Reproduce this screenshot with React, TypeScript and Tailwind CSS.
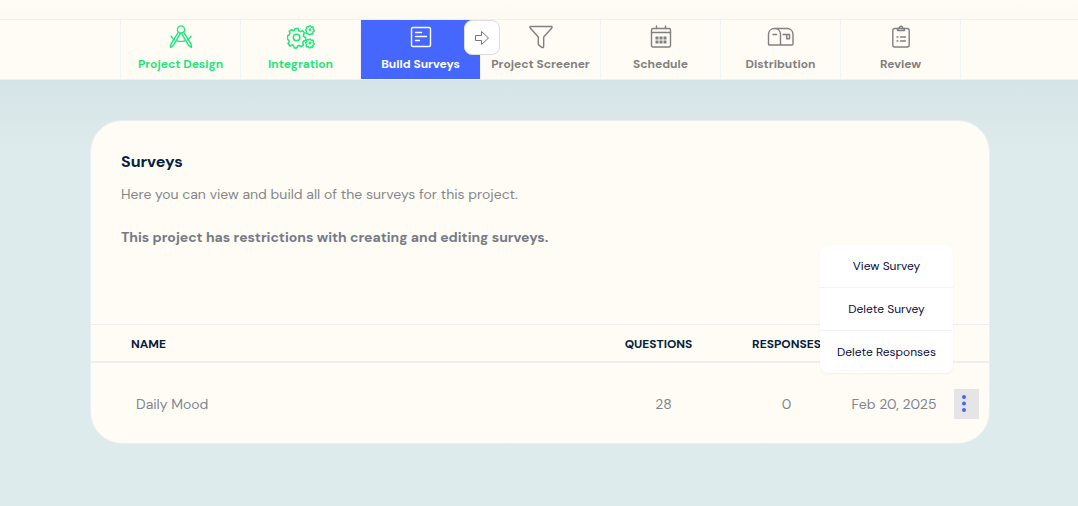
import React, { useState } from 'react';

interface Step {
  label: string;
  status: 'done' | 'active' | 'todo';
  icon: React.ReactNode;
}

interface Survey {
  name: string;
  questions: number;
  responses: number;
  created: string;
}

interface IconProps {
  children: React.ReactNode;
  wide?: boolean;
}

const Icon: React.FC<IconProps> = ({ children, wide }) => (
  <svg
    className={wide ? 'w-7 h-6' : 'w-6 h-6'}
    viewBox={wide ? '0 0 28 24' : '0 0 24 24'}
    fill="none"
    stroke="currentColor"
    strokeWidth="1.4"
    strokeLinecap="round"
    strokeLinejoin="round"
    aria-hidden="true"
  >
    {children}
  </svg>
);

const gearPath =
  'M8.4 2.5h3.2l.6 2.4 1.7.8 2.3-1.1 2 2.4-1.2 2.2.5 1.7 2 1v2.9l-2.3.7-.9 1.7.9 2.2-2.4 1.9-2.1-1.3-1.5.4-.9 2.2H7.6l-.8-2.3-1.5-.7-2.3 1-1.9-2.5 1.2-2.1-.4-1.5-1.4-.8V10l1.8-.8.8-1.7-.7-2.2 2.4-1.8L7 4.9z';

const steps: Step[] = [
  {
    label: 'Project Design',
    status: 'done',
    icon: (
      <Icon>
        <circle cx="12" cy="4.5" r="3.6" />
        <path d="M9.4 7.1 1.9 19.1l-.4 3.3 2.7-1.7L11.6 8.2M14.6 7.1l7.5 12 .4 3.3-2.7-1.7L12.4 8.2" />
        <path d="M2 11.2c1 1.6 2.2 2.8 3.6 3.7M8 15.8c2.6.8 5.4.8 8 0M18.4 14.9c1.4-.9 2.6-2.1 3.6-3.7" />
      </Icon>
    ),
  },
  {
    label: 'Integration',
    status: 'done',
    icon: (
      <Icon wide>
        <g transform="translate(0 1.2) scale(.96)" strokeWidth="1.6">
          <path d={gearPath} />
          <circle cx="10" cy="11.8" r="3.4" />
        </g>
        <g transform="translate(18.6 -.2) scale(.44)" strokeWidth="3">
          <path d={gearPath} />
          <circle cx="10" cy="11.5" r="1.8" />
        </g>
        <g transform="translate(18.6 13) scale(.44)" strokeWidth="3">
          <path d={gearPath} />
          <circle cx="10" cy="11.5" r="1.8" />
        </g>
      </Icon>
    ),
  },
  {
    label: 'Build Surveys',
    status: 'active',
    icon: (
      <Icon>
        <rect x="2.5" y="2.5" width="19" height="19" rx="1.5" />
        <path d="M6.5 7.5h6M6.5 11.5h11M6.5 15.5h4" />
      </Icon>
    ),
  },
  {
    label: 'Project Screener',
    status: 'todo',
    icon: (
      <Icon>
        <path d="M1 1.5h22v1.3l-8.3 9.2v8.5l-.2 2-1.3.1-3.9-3v-7.6L1 2.8z" />
      </Icon>
    ),
  },
  {
    label: 'Schedule',
    status: 'todo',
    icon: (
      <Icon>
        <rect x="2.5" y="3.5" width="19" height="18.5" rx="1.5" />
        <path d="M2.5 7.5h19M7.5 1v2.5M16.5 1v2.5" />
        <path
          d="M6.5 13h3M10.5 13h3M14.5 13h3M6.5 17h3M10.5 17h3M14.5 17h3"
          strokeWidth="2.8"
          strokeLinecap="butt"
        />
      </Icon>
    ),
  },
  {
    label: 'Distribution',
    status: 'todo',
    icon: (
      <Icon wide>
        <path d="M7.5 3.5h12.5c3.5 0 6 2.5 6 6v9.5a1 1 0 0 1-1 1H2.500a1 1 0 0 1-1-1V9.5c0-3.5 2.5-6 6-6s6 2.5 6 6V20" />
        <path d="M6 9.5h3.5M16 9.5h6.5v4.2h-2.8V9.5" />
      </Icon>
    ),
  },
  {
    label: 'Review',
    status: 'todo',
    icon: (
      <Icon>
        <rect x="3.8" y="3.5" width="16.4" height="18.5" rx="2" />
        <path d="M8.5 5.5v-2h1.8c0-3 3.4-3 3.4 0h1.8v2z" />
        <path d="M8 12h1M11.5 12h5M8 16h1M11.5 16h5" />
      </Icon>
    ),
  },
];

const statusStyles = {
  done: 'text-[#1fe57d]',
  active: 'text-white bg-[#4667fd]',
  todo: 'text-[#808080]',
};

const surveys: Survey[] = [
  { name: 'Daily Mood', questions: 28, responses: 0, created: 'Feb 20, 2025' },
];

const menuActions = ['View Survey', 'Delete Survey', 'Delete Responses'];

const StepNav: React.FC = () => (
  <nav className="bg-[#fffcf5] border-y border-[#eef0f2] pl-[3px]">
    <ol className="flex max-w-[841px] mx-auto border-r border-[#f1f2f5]">
      {steps.map(step => (
        <li key={step.label} className="relative flex-1 border-l border-[#f1f2f5]">
          <a
            href="#"
            className={`flex flex-col items-center h-[59px] pt-[5px] ${statusStyles[step.status]}`}
          >
            {step.icon}
            <span className="mt-[7px] text-[12px] leading-4 font-bold whitespace-nowrap">{step.label}</span>
          </a>
          {step.status === 'active' && (
            <button
              aria-label="Next step"
              className="absolute z-10 top-0 -right-5 w-9 h-[35px] flex items-center justify-center bg-white border border-[#dcdcdc] rounded-lg text-[#777]"
            >
              <svg className="w-4 h-4" viewBox="0 0 16 16" fill="none" stroke="currentColor" strokeLinejoin="round">
                <path d="M1.5 5.5h6v-4L14.5 8l-7 6.5v-4h-6z" />
              </svg>
            </button>
          )}
        </li>
      ))}
    </ol>
  </nav>
);

const SurveyMenu: React.FC = () => (
  <div
    role="menu"
    className="absolute z-10 right-full bottom-full mr-px mb-4 w-[133px] bg-white rounded-lg shadow-[0_1px_2px_rgba(0,0,0,0.05)] overflow-hidden divide-y divide-[#f1f3f6]"
  >
    {menuActions.map(action => (
      <button
        key={action}
        role="menuitem"
        className="block w-full py-[13px] text-[12px] leading-4 text-center text-[#0d0c3d] whitespace-nowrap"
      >
        {action}
      </button>
    ))}
  </div>
);

const App: React.FC = () => {
  const [openMenu, setOpenMenu] = useState<string | null>('Daily Mood');

  return (
    <div className="min-h-screen flex flex-col bg-[#deebec] font-['DM_Sans',Inter,sans-serif]">
      <div className="h-[19px] bg-linear-to-b from-[#fffcf5] to-[#fdfaf3]" />
      <StepNav />

      <main className="flex-1 pl-0.5 pt-10 pb-10 bg-linear-to-b from-[#d5e4e7] to-[#deebec] to-[70px]">
        <section className="max-w-[900px] mx-auto bg-[#fffcf5] border border-[#e9eff1] rounded-[32px]">
          <div className="px-[30px] pt-[29px] pb-[75px]">
            <h2 className="text-[16px] leading-6 font-bold text-[#04213b]">Surveys</h2>
            <p className="mt-2 text-[14px] leading-6 text-[#85878a]">
              Here you can view and build all of the surveys for this project.
            </p>
            <p className="mt-[19px] text-[14px] leading-6 font-bold text-[#737b87]">
              This project has restrictions with creating and editing surveys.
            </p>
          </div>

          <table className="w-full table-fixed">
            <colgroup>
              <col />
              <col className="w-[127px]" />
              <col className="w-[129px]" />
              <col className="w-[86px]" />
              <col className="w-[52px]" />
            </colgroup>
            <thead className="border-t border-b-2 border-[#eceff0] text-[12px] leading-4 text-[#04213b]">
              <tr className="h-[37px]">
                <th className="pl-10 pt-0.5 text-left font-bold">NAME</th>
                <th className="pt-0.5 font-bold">QUESTIONS</th>
                <th className="pt-0.5 font-bold">RESPONSES</th>
                <td />
                <td />
              </tr>
            </thead>
            <tbody className="text-[14px] leading-6 text-[#7f8690]">
              {surveys.map(survey => (
                <tr key={survey.name} className="h-[81px]">
                  <td className="pl-[45px] pt-[3px]">{survey.name}</td>
                  <td className="pl-2.5 pt-[3px] text-center">{survey.questions}</td>
                  <td className="pt-[3px] text-center">{survey.responses}</td>
                  <td className="pt-[3px] text-center whitespace-nowrap">{survey.created}</td>
                  <td className="pt-[3px]">
                    <div className="relative w-[25px] ml-auto mr-2.5">
                      <button
                        aria-label={`Actions for ${survey.name}`}
                        onClick={() => setOpenMenu(openMenu === survey.name ? null : survey.name)}
                        className="flex items-center w-full h-[30px] pl-2 bg-[#e5e5e5] text-[#4667fd]"
                      >
                        <svg className="w-1 h-[18px]" viewBox="0 0 4 18" fill="currentColor">
                          <circle cx="2" cy="2" r="2" />
                          <circle cx="2" cy="8.5" r="2" />
                          <circle cx="2" cy="15" r="2" />
                        </svg>
                      </button>
                      {openMenu === survey.name && <SurveyMenu />}
                    </div>
                  </td>
                </tr>
              ))}
            </tbody>
          </table>
        </section>
      </main>
    </div>
  );
};

export default App;
